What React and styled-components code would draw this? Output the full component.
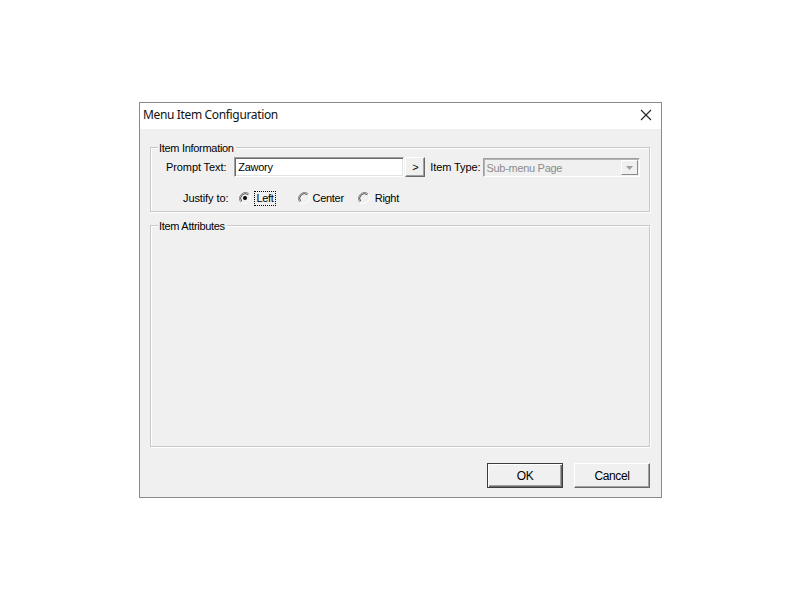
import React, { useState } from 'react'
import styled, { createGlobalStyle } from 'styled-components'

const Global = createGlobalStyle`
  html, body {
    margin: 0;
    padding: 0;
    background: #ffffff;
  }
  body {
    font-family: "Liberation Sans", Arial, sans-serif;
    font-size: 11px;
    color: #000;
  }
`

const Desktop = styled.div`
  width: 800px;
  height: 600px;
  padding: 102px 0 0 139px;
  box-sizing: border-box;
`

const Window = styled.div`
  width: 523px;
  border: 1px solid #8a8a8a;
  box-sizing: border-box;
  background: #f0f0f0;
  display: flex;
  flex-direction: column;
`

const TitleBar = styled.div`
  height: 26px;
  box-sizing: border-box;
  background: #ffffff;
  display: flex;
  align-items: center;
  justify-content: space-between;
  padding: 0 8px 3px 3px;
`

const TitleText = styled.div`
  font-family: "Noto Sans", "Open Sans", sans-serif;
  font-size: 12px;
  letter-spacing: -0.35px;
  color: #111;
`

const CloseBtn = styled.div`
  width: 14px;
  height: 14px;
  display: flex;
  align-items: center;
  justify-content: center;
`

const Body = styled.div`
  display: flex;
  flex-direction: column;
  padding: 18px 11px 9px 10px;
`

const Group = styled.div`
  position: relative;
  height: ${({ $h }) => $h}px;
  box-sizing: border-box;
  border: 1px solid #c8c8c8;
  box-shadow: inset 1px 1px 0 #ffffff, 1px 1px 0 #ffffff;
  margin-bottom: ${({ $mb }) => $mb || 0}px;
  padding: 9px 0 0 0;
`

const GroupTitle = styled.div`
  position: absolute;
  top: -6px;
  left: 7px;
  padding: 0 2px 0 1px;
  background: #f0f0f0;
  letter-spacing: -0.3px;
  line-height: 13px;
`

const Row = styled.div`
  display: flex;
  align-items: center;
  height: ${({ $h }) => $h || 20}px;
  padding-left: ${({ $pl }) => $pl}px;
  margin-top: ${({ $mt }) => $mt || 0}px;
`

const Label = styled.span`
  letter-spacing: -0.1px;
  margin-left: ${({ $ml }) => $ml || 0}px;
  margin-right: ${({ $mr }) => $mr || 0}px;
  white-space: nowrap;
`

const TextInput = styled.input`
  width: 170px;
  height: 20px;
  box-sizing: border-box;
  border-style: solid;
  border-width: 1px;
  border-color: #a0a0a0 #ffffff #ffffff #a0a0a0;
  box-shadow: inset 1px 1px 0 #696969, inset -1px -1px 0 #e3e3e3;
  background: #fff;
  font-family: "Liberation Sans", Arial, sans-serif;
  font-size: 11px;
  letter-spacing: -0.3px;
  padding: 0 3px;
  outline: none;
  color: #000;
`

const SmallButton = styled.div`
  width: 20px;
  height: 20px;
  box-sizing: border-box;
  margin-left: 1px;
  border-style: solid;
  border-width: 1px;
  border-color: #ffffff #696969 #696969 #ffffff;
  box-shadow: inset -1px -1px 0 #a0a0a0;
  display: flex;
  align-items: center;
  justify-content: center;
  font-size: 11px;
  padding-bottom: 1px;
`

const Select = styled.div`
  width: 157px;
  height: 19px;
  box-sizing: border-box;
  border-style: solid;
  border-width: 1px;
  border-color: #a0a0a0 #ffffff #ffffff #a0a0a0;
  box-shadow: inset 1px 1px 0 #b4b4b4;
  display: flex;
  align-items: center;
  justify-content: space-between;
  background: #f0f0f0;
  color: #8c8c8c;
  letter-spacing: -0.3px;
  padding: 1px 1px 1px 3px;
  margin-top: 1px;
`

const SelectArrow = styled.div`
  width: 17px;
  height: 15px;
  box-sizing: border-box;
  border-style: solid;
  border-width: 1px;
  border-color: #ffffff #8a8a8a #8a8a8a #ffffff;
  display: flex;
  align-items: center;
  justify-content: center;
`

const RadioOpt = styled.label`
  display: flex;
  align-items: center;
  margin-right: ${({ $mr }) => $mr || 0}px;
  letter-spacing: -0.3px;
`

const RadioText = styled.span`
  margin-left: ${({ $ml }) => $ml || 6}px;
  padding: 0 1px;
  outline: ${({ $focus }) => ($focus ? '1px dotted #000' : 'none')};
  line-height: 13px;
`

const Footer = styled.div`
  display: flex;
  justify-content: flex-end;
  gap: 11px;
  height: 25px;
`

const DlgButton = styled.div`
  width: 76px;
  height: 25px;
  box-sizing: border-box;
  display: flex;
  align-items: center;
  justify-content: center;
  font-family: "Liberation Sans", Arial, sans-serif;
  font-size: 12px;
  letter-spacing: -0.4px;
  border-style: solid;
  border-width: 1px;
  border-color: ${({ $def }) => ($def ? '#3c3c3c' : '#ffffff #696969 #696969 #ffffff')};
  box-shadow: ${({ $def }) =>
    $def
      ? 'inset 1px 1px 0 #ffffff, inset -1px -1px 0 #696969, inset -2px -2px 0 #a0a0a0'
      : 'inset -1px -1px 0 #a0a0a0'};
`

const Radio = ({ checked }) => (
  <svg width="12" height="12" viewBox="0 0 12 12">
    <path d="M10.2 1.8 A6 6 0 0 0 1.8 10.2" fill="none" stroke="#8a8a8a" strokeWidth="1" />
    <path d="M9.3 2.7 A4.7 4.7 0 0 0 2.7 9.3" fill="none" stroke="#505050" strokeWidth="1" />
    <path d="M1.8 10.2 A6 6 0 0 0 10.2 1.8" fill="none" stroke="#ffffff" strokeWidth="1" />
    {checked && <circle cx="6" cy="6" r="2" fill="#000" />}
  </svg>
)

export default function App() {
  const [justify, setJustify] = useState('left')
  const [prompt, setPrompt] = useState('Zawory')

  return (
    <>
      <Global />
      <Desktop>
        <Window>
          <TitleBar>
            <TitleText>Menu Item Configuration</TitleText>
            <CloseBtn>
              <svg width="12" height="12" viewBox="0 0 12 12">
                <path d="M1 1 L11 11 M11 1 L1 11" stroke="#222" strokeWidth="1.1" />
              </svg>
            </CloseBtn>
          </TitleBar>
          <Body>
            <Group $h={65} $mb={13}>
              <GroupTitle>Item Information</GroupTitle>
              <Row $pl={15}>
                <Label $mr={8}>Prompt Text:</Label>
                <TextInput value={prompt} onChange={(e) => setPrompt(e.target.value)} />
                <SmallButton>&gt;</SmallButton>
                <Label $ml={5} $mr={2}>Item Type:</Label>
                <Select>
                  <span>Sub-menu Page</span>
                  <SelectArrow>
                    <svg width="7" height="4" viewBox="0 0 7 4">
                      <path d="M0 0 L7 0 L3.5 4 Z" fill="#a0a0a0" />
                    </svg>
                  </SelectArrow>
                </Select>
              </Row>
              <Row $pl={32} $h={16} $mt={13}>
                <Label $mr={11}>Justify to:</Label>
                <RadioOpt $mr={23} onClick={() => setJustify('left')}>
                  <Radio checked={justify === 'left'} />
                  <RadioText $ml={4} $focus>Left</RadioText>
                </RadioOpt>
                <RadioOpt $mr={13} onClick={() => setJustify('center')}>
                  <Radio checked={justify === 'center'} />
                  <RadioText $ml={2}>Center</RadioText>
                </RadioOpt>
                <RadioOpt onClick={() => setJustify('right')}>
                  <Radio checked={justify === 'right'} />
                  <RadioText $ml={4}>Right</RadioText>
                </RadioOpt>
              </Row>
            </Group>
            <Group $h={222} $mb={16}>
              <GroupTitle>Item Attributes</GroupTitle>
            </Group>
            <Footer>
              <DlgButton $def>OK</DlgButton>
              <DlgButton>Cancel</DlgButton>
            </Footer>
          </Body>
        </Window>
      </Desktop>
    </>
  )
}
